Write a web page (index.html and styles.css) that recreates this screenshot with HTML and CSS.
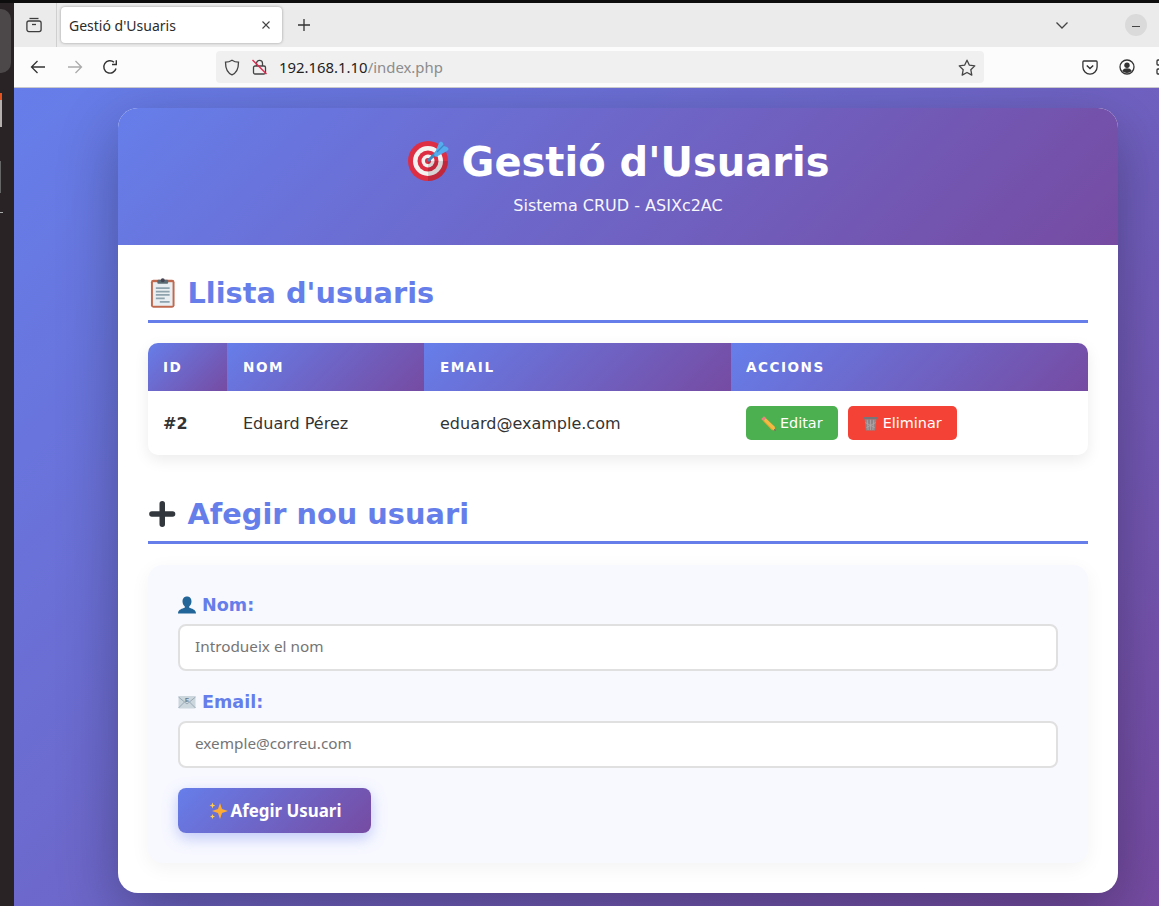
FILE: index.html

```html
<!DOCTYPE html>
<html lang="ca">
<head>
  <meta charset="UTF-8">
  <title>Gestió d'Usuaris</title>
  <link rel="stylesheet" href="styles.css">
</head>
<body>
  <aside class="dock">
    <div class="dock-active"></div>
    <div class="dock-app"></div>
    <div class="dock-drive"></div>
    <div class="dock-line"></div>
  </aside>

  <div class="window">
    <div class="tabbar">
      <div class="tabbar-left">
        <svg width="16" height="16" viewBox="0 0 16 16" fill="none" stroke="#3d3d3d" stroke-width="1.3"><path d="M3.5 1.5h9"/><rect x="0.9" y="4" width="14.2" height="10.6" rx="2"/><path d="M6 7.5h4"/></svg>
      </div>
      <div class="tab">
        <span>Gestió d'Usuaris</span>
        <svg width="10" height="10" viewBox="0 0 10 10" stroke="#444" stroke-width="1.1"><path d="M1.5 1.5l7 7M8.5 1.5l-7 7"/></svg>
      </div>
      <svg class="newtab" width="14" height="14" viewBox="0 0 14 14" stroke="#333" stroke-width="1.3"><path d="M7 1v12M1 7h12"/></svg>
      <div class="spacer"></div>
      <svg class="tabmenu" width="14" height="9" viewBox="0 0 14 9" fill="none" stroke="#444" stroke-width="1.3"><path d="M1.5 1.5L7 7l5.5-5.5"/></svg>
      <div class="winbtn"><i></i></div>
    </div>

    <div class="toolbar">
      <svg class="navbtn" width="16" height="16" viewBox="0 0 16 16" fill="none" stroke="#333" stroke-width="1.3"><path d="M15 8H1.5M7.5 2L1.5 8l6 6"/></svg>
      <svg class="navbtn" width="16" height="16" viewBox="0 0 16 16" fill="none" stroke="#aaa" stroke-width="1.3"><path d="M1 8h13.5M8.5 2l6 6-6 6"/></svg>
      <svg class="navbtn reload" width="16" height="16" viewBox="0 0 16 16" fill="none" stroke="#333" stroke-width="1.4"><path d="M14 9.5A6.2 6.2 0 1 1 12 3.2"/><path d="M14.3 1.2v4.3H10"/></svg>
      <div class="urlbar">
        <svg width="16" height="17" viewBox="0 0 16 17" fill="none" stroke="#444" stroke-width="1.3"><path d="M8 1.2c2 1.4 4 2 6.5 2 0 6-1.5 10.5-6.5 12.6C3 13.7 1.5 9.2 1.5 3.2c2.5 0 4.5-.6 6.5-2z"/></svg>
        <svg class="lock" width="15" height="16" viewBox="0 0 15 16" fill="none"><path d="M4.5 7V4.3a3 3 0 0 1 6 0V7" stroke="#444" stroke-width="1.3"/><rect x="1.5" y="7" width="12" height="8" rx="1.5" stroke="#444" stroke-width="1.3"/><path d="M.5 1l14 14" stroke="#e22850" stroke-width="1.4"/></svg>
        <span class="url"><b>192.168.1.10</b>/index.php</span>
        <div class="spacer"></div>
        <svg width="18" height="17" viewBox="0 0 18 17" fill="none" stroke="#444" stroke-width="1.3" stroke-linejoin="round"><path d="M9 1.2l2.4 5 5.4.7-4 3.800 1 5.400L9 13.500l-4.800 2.600 1-5.400-4-3.800 5.400-.7z"/></svg>
      </div>
      <div class="toolbar-right">
        <svg width="16" height="15" viewBox="0 0 16 15" fill="none" stroke="#333" stroke-width="1.3"><path d="M1.8 1h12.4c.5 0 .9.4.9.9V7a7.1 7.1 0 0 1-14.2 0V1.900c0-.5.4-.9.9-.9z"/><path d="M4.8 5.5L8 8.5l3.200-3" stroke-width="1.5"/></svg>
        <svg width="16" height="16" viewBox="0 0 16 16" fill="none" stroke="#333" stroke-width="1.3"><circle cx="8" cy="8" r="7"/><circle cx="8" cy="6.2" r="2.7" fill="#333" stroke="none"/><path d="M3.2 12c1-2 2.8-2.7 4.8-2.7s3.800.7 4.800 2.700c-1.200 1.300-3 2-4.800 2s-3.600-.7-4.800-2z" fill="#333" stroke="none"/></svg>
        <svg width="16" height="16" viewBox="0 0 16 16" fill="none" stroke="#333" stroke-width="1.3"><rect x="1" y="1" width="5" height="5" rx="1"/><rect x="1" y="10" width="5" height="5" rx="1"/><rect x="10" y="10" width="5" height="5" rx="1"/></svg>
      </div>
    </div>

    <main class="page">
      <div class="container">
        <header class="header">
          <h1>
            <svg viewBox="0 0 44 44" width="44" height="44">
              <circle cx="21" cy="21" r="20" fill="#dd2e44"/>
              <circle cx="21" cy="21" r="15" fill="#f5f2f2"/>
              <circle cx="21" cy="21" r="10.5" fill="#dd2e44"/>
              <circle cx="21" cy="21" r="6.5" fill="#f5f2f2"/>
              <circle cx="21" cy="21" r="3" fill="#dd2e44"/>
              <path d="M21 41A20 20 0 0 0 41 21L21 21z" fill="#000" opacity=".12"/>
              <path d="M21 21L33 9" stroke="#3b88c3" stroke-width="3"/>
              <path d="M27 15L32 3q2-3 4 0l1 3 3 1q3 2 0 4L29 17z" fill="#55acee"/>
              <path d="M30 12l7-7" stroke="#3b88c3" stroke-width="1.2"/>
            </svg>
            Gestió d'Usuaris
          </h1>
          <p>Sistema CRUD - ASIXc2AC</p>
        </header>

        <div class="content">
          <section class="section">
            <h2>
              <svg class="h2-icon" viewBox="0 0 29 30" width="28.5" height="30">
                <rect x="3" y="1.5" width="24" height="28.5" rx="2.5" fill="#c1694f"/>
                <rect x="5" y="4" width="20" height="24" fill="#e8eef1"/>
                <path d="M8 10h14M8 13.500h14M8 17h14M8 20.500h9M12 24h10" stroke="#8fa3ae" stroke-width="1.8"/>
                <rect x="9.5" y="1.5" width="11" height="4" rx="1" fill="#5b6b73"/>
                <circle cx="15" cy="2" r="2" fill="#445"/>
              </svg>
              Llista d'usuaris
            </h2>
            <table class="users">
              <thead>
                <tr>
                  <th class="col-id">ID</th>
                  <th class="col-name">Nom</th>
                  <th class="col-email">Email</th>
                  <th class="col-actions">Accions</th>
                </tr>
              </thead>
              <tbody>
                <tr>
                  <td class="col-id"><strong>#2</strong></td>
                  <td class="col-name">Eduard Pérez</td>
                  <td class="col-email">eduard@example.com</td>
                  <td class="actions">
                    <a class="btn btn-edit">
                      <svg viewBox="0 0 15 15" width="15" height="15"><path d="M3 .5L.5 3l10 10.500L15 15l-1.500-4.500z" fill="#f4b942"/><path d="M3 .5L.5 3l2 2L5 2.500z" fill="#ea7f86"/><path d="M12.500 14.200L15 15l-.8-2.500z" fill="#55606a"/><path d="M2.500 5L12 14.500" stroke="#d99e2b"/></svg>
                      Editar
                    </a>
                    <a class="btn btn-delete">
                      <svg viewBox="0 0 16 16" width="15" height="15"><path d="M.5 1h15v2.500H.5z" fill="#77757a"/><path d="M1.800 3.500h12.400l-1.300 12H3.100z" fill="#8f8588"/><path d="M4.500 4l1 11M8 4v11M11.500 4l-1 11M2.500 7l10 5.500M13.500 7l-10 5.500" stroke="#b5a8aa" stroke-width=".8"/></svg>
                      Eliminar
                    </a>
                  </td>
                </tr>
              </tbody>
            </table>
          </section>

          <section class="section section-form">
            <h2>
              <svg class="h2-icon" viewBox="0 0 29 28" width="28.5" height="28"><path d="M14.500 3.500v21M4 14h21" stroke="#31373d" stroke-width="5.600" stroke-linecap="round"/></svg>
              Afegir nou usuari
            </h2>
            <form class="form-card">
              <div class="field">
                <label>
                  <svg viewBox="1 1.500 16 15" width="18" height="18"><path d="M9 1.500c2.800 0 4 2 4 4.300 0 2-1 3.400-2 4.300v1.400c2 .7 6 1.500 6 5H1c0-3.500 4-4.300 6-5v-1.400c-1-.9-2-2.300-2-4.300 0-2.300 1.200-4.300 4-4.300z" fill="#269"/></svg>
                  Nom:
                </label>
                <input type="text" placeholder="Introdueix el nom">
              </div>
              <div class="field">
                <label>
                  <svg viewBox="0 0 18 18" width="18" height="18"><rect x=".5" y="3" width="17" height="12.500" rx="1" fill="#ccd6dd"/><path d="M.5 4l8.500 7 8.500-7M.5 15l6-6M17.500 15l-6-6" fill="none" stroke="#99aab5"/><text x="9" y="9" font-size="6" font-weight="700" text-anchor="middle" fill="#66757f" font-family="Liberation Sans, sans-serif">E</text></svg>
                  Email:
                </label>
                <input type="email" placeholder="exemple@correu.com">
              </div>
              <button class="btn-submit" type="button">
                <svg viewBox="0 0 20 20" width="20" height="20"><path d="M12 2l2 6 6 2-6 2-2 6-2-6-6-2 6-2z" fill="#ffac33"/><path d="M4.500 1.500l.8 2.200 2.200.8-2.200.8-.8 2.200-.8-2.200-2.200-.8 2.200-.8zM4.500 13l.7 1.800 1.800.7-1.800.7-.7 1.800-.7-1.800-1.800-.7 1.800-.7z" fill="#ffcc4d"/></svg>
                Afegir Usuari
              </button>
            </form>
          </section>
        </div>
      </div>
    </main>
  </div>
</body>
</html>
```

FILE: styles.css

```css
* {
  box-sizing: border-box;
}
html, body {
  height: 100%;
}
body {
  margin: 0;
  display: flex;
  height: 906px;
  overflow: hidden;
  background: #0d0d0d;
  font-family: "DejaVu Sans", sans-serif;
  color: #333;
}

/* desktop dock, only a sliver is visible */
.dock {
  width: 14px;
  flex: none;
  margin-top: 3px;
  padding-top: 6px;
  background: #2a2326;
  display: flex;
  flex-direction: column;
  overflow: hidden;
}
.dock-active {
  width: 11px;
  height: 64px;
  background: #4c484a;
  border-radius: 0 10px 10px 0;
}
.dock-app {
  width: 2px;
  height: 34px;
  margin-top: 20px;
  background: linear-gradient(180deg, #e2531f 0 7px, #b5b0ae 7px);
}
.dock-drive {
  width: 1px;
  height: 32px;
  margin-top: 34px;
  background: #666;
}
.dock-line {
  width: 3px;
  height: 1px;
  margin-top: 19px;
  background: #aaa;
}

.window {
  flex: 1;
  min-width: 0;
  display: flex;
  flex-direction: column;
  margin-top: 3px;
}

.tabbar {
  height: 44px;
  flex: none;
  display: flex;
  align-items: center;
  background: #ebebeb;
  font-family: "Noto Sans", sans-serif;
}
.tabbar-left {
  width: 43px;
  height: 44px;
  flex: none;
  display: flex;
  align-items: center;
  justify-content: center;
  border-right: 1px solid #cfcfcf;
  padding-right: 3px;
}
.tab {
  width: 221px;
  height: 36px;
  margin-left: 4px;
  padding: 0 11px 0 8px;
  display: flex;
  align-items: center;
  justify-content: space-between;
  background: #fff;
  border-radius: 4px;
  box-shadow: 0 0 3px rgba(0,0,0,.35);
  font-size: 14px;
  color: #2b2b2b;
}
.newtab {
  margin-left: 15px;
}
.spacer {
  flex: 1;
}
.tabmenu {
  margin-right: 56px;
}
.winbtn {
  width: 22px;
  height: 22px;
  margin-right: 12px;
  border-radius: 50%;
  background: #dadada;
  display: flex;
  align-items: center;
  justify-content: center;
}
.winbtn i {
  width: 8px;
  height: 1px;
  margin-top: 3px;
  background: #444;
}

.toolbar {
  height: 41px;
  flex: none;
  display: flex;
  align-items: center;
  padding-left: 16px;
  background: #fcfcfc;
  border-bottom: 1px solid #c9c9cc;
}
.navbtn {
  flex: none;
  margin-right: 21px;
}
.reload {
  margin-left: -2px;
}
.urlbar {
  flex: none;
  width: 768px;
  height: 32px;
  margin-left: 77px;
  padding: 0 8px;
  display: flex;
  align-items: center;
  gap: 13px;
  background: #f0f0f0;
  border-radius: 4px;
}
.lock {
  margin-left: -1px;
}
.url {
  margin-left: -1px;
  font-family: "Noto Sans", sans-serif;
  font-size: 14.9px;
  color: #8c8c8c;
}
.url b {
  font-weight: 400;
  color: #222;
}
.toolbar-right {
  flex: none;
  display: flex;
  align-items: center;
  gap: 21px;
  margin-left: 98px;
}

/* page */
.page {
  flex: 1;
  min-height: 0;
  padding: 20px 0 0 104px;
  background: linear-gradient(135deg, #667eea 0%, #764ba2 100%);
  overflow: hidden;
}
.container {
  width: 1000px;
  height: 785px;
  background: #fff;
  border-radius: 20px;
  box-shadow: 0 20px 60px rgba(0,0,0,0.3);
  overflow: hidden;
}
.header {
  height: 137px;
  padding-top: 31px;
  text-align: center;
  color: #fff;
  background: linear-gradient(135deg, #667eea 0%, #764ba2 100%);
}
.header h1 {
  margin: 0;
  display: flex;
  align-items: center;
  justify-content: center;
  gap: 11px;
  height: 46px;
  font-size: 40px;
  line-height: 46px;
  font-weight: 700;
}
.header p {
  margin: 11px 0 0;
  font-size: 16px;
  line-height: 19px;
  opacity: .95;
}

.content {
  padding: 30px;
}
.section h2 {
  margin: 0;
  height: 48px;
  padding-bottom: 10px;
  display: flex;
  align-items: center;
  gap: 11px;
  color: #667eea;
  font-size: 28.8px;
  line-height: 34px;
  font-weight: 700;
  border-bottom: 3px solid #667eea;
}
.h2-icon {
  flex: none;
}

.users {
  width: 100%;
  margin-top: 20px;
  border-collapse: separate;
  border-spacing: 0;
  border-radius: 10px;
  overflow: hidden;
  background: #fff;
  box-shadow: 0 5px 15px rgba(0,0,0,0.08);
  table-layout: fixed;
}
.users th {
  height: 48px;
  padding: 0 15px;
  text-align: left;
  font-size: 13.6px;
  font-weight: 700;
  letter-spacing: 1.5px;
  text-transform: uppercase;
  color: #fff;
  background: linear-gradient(135deg, #667eea 0%, #764ba2 100%);
}
.col-id { width: 79px; }
.col-name { width: 197px; }
.col-email { width: 307px; }
.users td {
  height: 64px;
  padding: 0 15px;
  font-size: 16px;
  color: #333;
}
.users .col-name,
.users .col-email {
  padding-left: 16px;
}
.users td strong {
  font-weight: 700;
}
.actions {
  white-space: nowrap;
}
.btn {
  display: inline-flex;
  align-items: center;
  gap: 4px;
  height: 34px;
  padding: 0 15px;
  border-radius: 5px;
  color: #fff;
  font-size: 14.4px;
  vertical-align: middle;
}
.btn-edit {
  background: #4caf50;
}
.btn-delete {
  margin-left: 5px;
  gap: 5px;
  background: #f44336;
}

.section-form {
  margin-top: 41px;
}
.form-card {
  margin-top: 21px;
  padding: 30px;
  height: 298px;
  background: #f8f9ff;
  border-radius: 15px;
  box-shadow: 0 5px 20px rgba(0,0,0,0.05);
}
.field + .field {
  margin-top: 21px;
}
.field label {
  display: flex;
  align-items: center;
  gap: 6px;
  height: 20px;
  margin-bottom: 9px;
  color: #667eea;
  font-size: 17.6px;
  font-weight: 700;
}
.field input {
  display: block;
  width: 100%;
  height: 47px;
  padding: 0 15px 3px;
  background: #fff;
  border: 2px solid #e0e0e0;
  border-radius: 8px;
  font-family: "Noto Sans", sans-serif;
  font-size: 15.3px;
  color: #333;
}
.field input::placeholder {
  color: #757575;
}
.btn-submit {
  display: flex;
  align-items: center;
  justify-content: center;
  gap: 3px;
  width: 193px;
  height: 45px;
  margin-top: 20px;
  border: none;
  border-radius: 8px;
  color: #fff;
  font-family: "Noto Sans", sans-serif;
  font-size: 16.9px;
  font-weight: 700;
  background: linear-gradient(135deg, #667eea 0%, #764ba2 100%);
  box-shadow: 0 5px 15px rgba(102,126,234,0.4);
}
```
